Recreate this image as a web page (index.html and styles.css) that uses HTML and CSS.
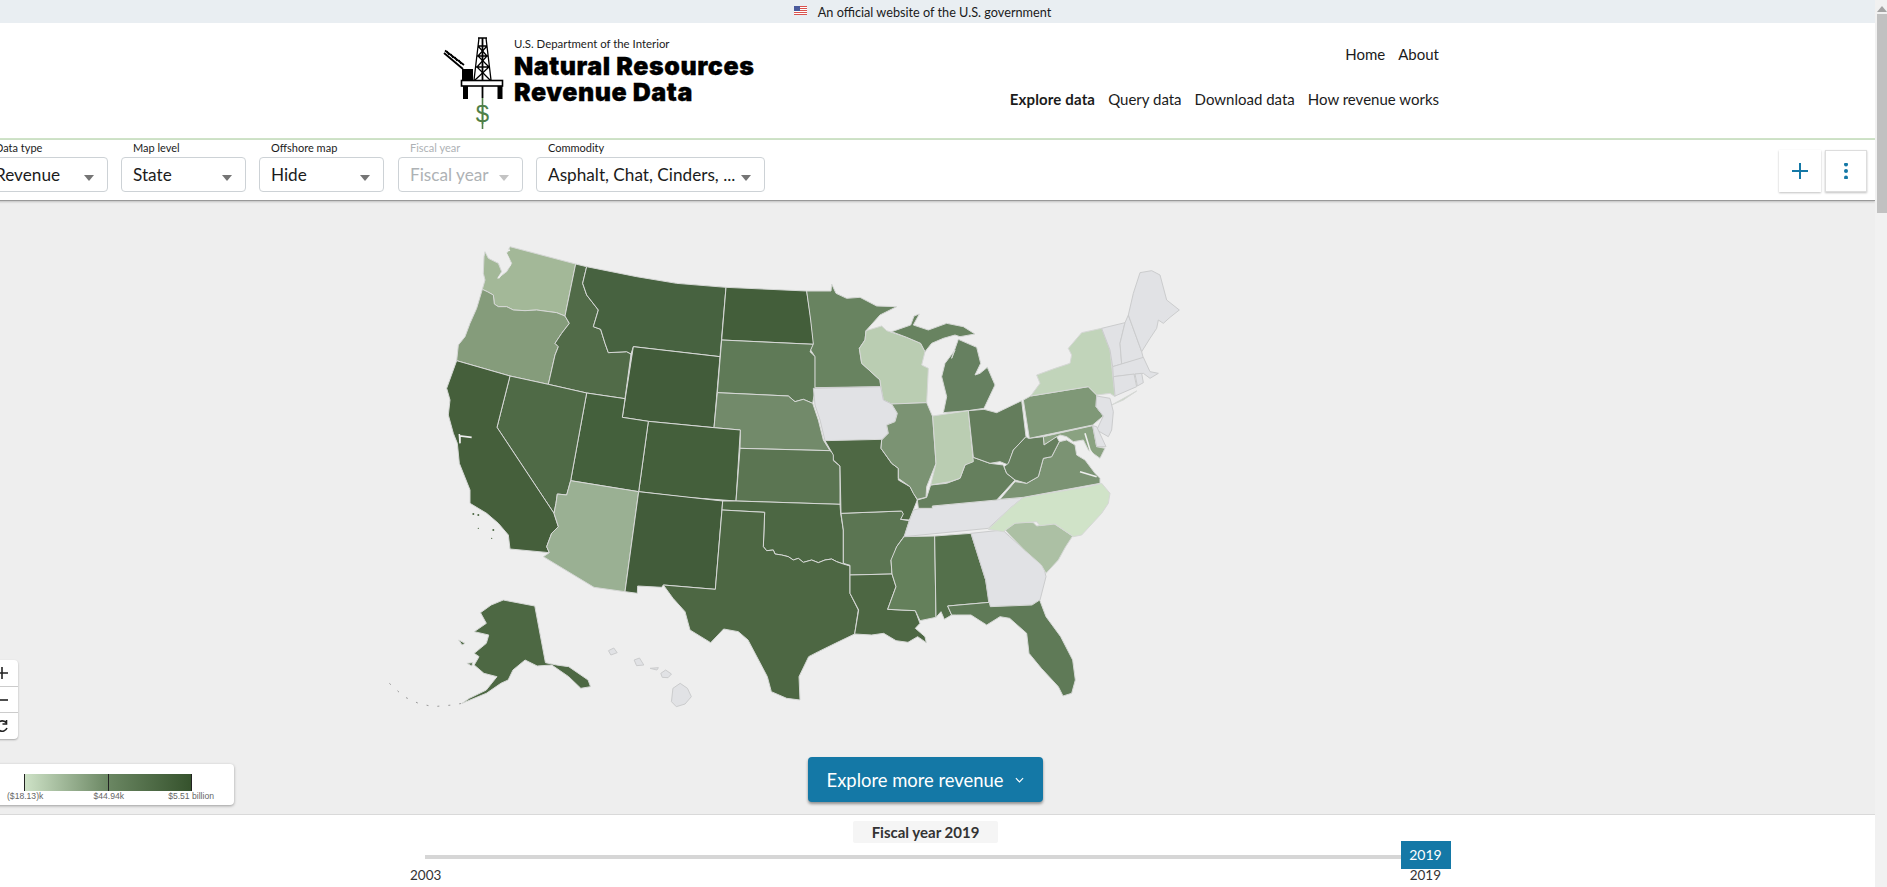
FILE: index.html
```html
<!DOCTYPE html>
<html lang="en">
<head>
<meta charset="utf-8">
<title>Natural Resources Revenue Data</title>
<link rel="stylesheet" href="styles.css">
</head>
<body>
<div class="page">
  <div class="banner">
    <svg class="flag" viewBox="0 0 13 9" aria-hidden="true">
      <rect width="13" height="9" fill="#fff"/>
      <path d="M0 .5h13M0 2.5h13M0 4.5h13M0 6.5h13M0 8.5h13" stroke="#d9534f" stroke-width="1"/>
      <rect width="6" height="5" fill="#4a5a9c"/>
    </svg>
    <span>An official website of the U.S. government</span>
  </div>
  <header class="site-header">
    <a class="logo">
      <svg class="logo-mark" viewBox="0 0 67 94" aria-hidden="true">
        <g fill="none" stroke="#000">
          <path d="M35 2h9M36 2 L31 44M43 2 L48 44M35 10h9M34 20h11M33 31h13M35 10 L44 20 L34 31 L47 44M44 10 L35 20 L46 31 L32 44" stroke-width="1.3"/>
          <path d="M39.5 2V62" stroke-width="1.8"/>
          <path d="M1 17 L20 33M2 14.5 L21 29" stroke-width="1.8"/>
          <path d="M4 15l2 4M8 18l2 4M12 21l2 4M16 24l2 4" stroke-width="1.3"/>
          <rect x="18.5" y="44.5" width="41" height="5.5" fill="#fff" stroke-width="1.6"/>
          <path d="M22.5 50v13M57 50v13" stroke-width="5"/>
        </g>
        <rect x="19" y="33" width="11" height="11.5"/>
        <path d="M39.5 62V93" stroke="#4f7f48" stroke-width="1.6"/>
        <text class="logo-dollar" x="39.5" y="86" text-anchor="middle">$</text>
      </svg>
      <span class="logo-text">
        <span class="logo-dept">U.S. Department of the Interior</span>
        <span class="logo-name">Natural Resources</span>
        <span class="logo-name">Revenue Data</span>
      </span>
    </a>
    <nav class="site-nav">
      <div class="nav-row nav-top"><a>Home</a><a>About</a></div>
      <div class="nav-row"><a class="active">Explore data</a><a>Query data</a><a>Download data</a><a>How revenue works</a></div>
    </nav>
  </header>
  <div class="filters">
    <div class="field"><label>Data type</label><div class="select"><span>Revenue</span><i class="caret"></i></div></div>
    <div class="field"><label>Map level</label><div class="select"><span>State</span><i class="caret"></i></div></div>
    <div class="field"><label>Offshore map</label><div class="select"><span>Hide</span><i class="caret"></i></div></div>
    <div class="field disabled"><label>Fiscal year</label><div class="select"><span>Fiscal year</span><i class="caret"></i></div></div>
    <div class="field wide"><label>Commodity</label><div class="select"><span>Asphalt, Chat, Cinders, ...</span><i class="caret"></i></div></div>
    <div class="tools">
      <button class="tool"><svg viewBox="0 0 16 16"><path d="M8 0v16M0 8h16" stroke="#1478a6" stroke-width="2"/></svg></button>
      <button class="tool outlined"><svg viewBox="0 0 16 16"><circle cx="8" cy="1.5" r="2"/><circle cx="8" cy="8" r="2"/><circle cx="8" cy="14.5" r="2"/></svg></button>
    </div>
  </div>
  <main class="map-area">
    <svg class="map" viewBox="0 0 2430 1500" aria-label="Map of revenue by state">
      <g>
        <polygon fill="#a3b898" points="420,50 617,102 585,258 560,248 500,240 465,242 430,240 410,230 385,230 373,222 370,195 352,185 337,178 345,150 340,130 342,80 345,65 355,85 385,100 395,125 383,145 410,125 425,100 410,70"/>
        <polygon fill="#859c7b" points="337,178 352,185 370,195 373,222 385,230 410,230 430,240 465,242 500,240 560,248 585,258 598,280 575,310 555,340 565,350 555,375 535,463 420,438 260,392 265,345 285,320 300,280 320,235"/>
        <polygon fill="#516b48" points="617,102 650,110 638,160 650,195 685,240 670,290 692,298 705,340 715,368 770,365 783,372 765,506 650,489 535,463 555,375 565,350 555,340 575,310 598,280 585,258"/>
        <polygon fill="#476240" points="650,110 800,140 920,160 1068,172 1050,380 790,350 783,372 770,365 715,368 705,340 692,298 670,290 685,240 650,195 638,160"/>
        <polygon fill="#425c3a" points="790,350 1050,380 1032,593 835,574 757,562"/>
        <polygon fill="#435e3a" points="1068,172 1310,183 1322,260 1332,343 1055,330"/>
        <polygon fill="#5f7a57" points="1055,330 1332,343 1320,365 1336,380 1336,475 1328,520 1300,508 1275,515 1255,498 1042,488"/>
        <polygon fill="#728a6a" points="1042,488 1255,498 1275,515 1300,508 1328,520 1345,570 1360,630 1380,662 1110,655 1111,600 1032,593"/>
        <polygon fill="#445f3b" points="835,574 1032,593 1111,600 1098,813 950,802 806,785"/>
        <polygon fill="#5b7552" points="1110,655 1380,662 1398,675 1390,692 1410,708 1410,823 1098,813"/>
        <polygon fill="#44603c" points="650,489 765,506 757,562 835,574 806,785 602,752"/>
        <polygon fill="#4f6a46" points="420,438 535,463 650,489 602,752 590,795 562,792 558,820 552,850 381,592"/>
        <polygon fill="#455f3b" points="260,392 420,438 381,592 552,850 565,890 545,910 530,950 538,968 420,957 415,915 385,880 350,850 300,820 300,780 268,700 262,640 250,610 235,555 240,510 230,475"/>
        <polygon fill="#9ab093" points="602,752 806,785 765,1085 672,1072 520,980 538,968 530,950 545,910 565,890 552,850 558,820 562,792 590,795"/>
        <polygon fill="#425c3a" points="806,785 1058,813 1036,1078 880,1065 875,1072 803,1068 802,1090 765,1085"/>
        <polygon fill="#4c6743" points="1058,813 1098,813 1410,823 1412,850 1420,900 1420,1002 1400,995 1385,987 1365,990 1345,998 1325,990 1300,997 1285,985 1270,990 1255,980 1235,975 1215,972 1210,960 1190,962 1180,950 1184,847 1056,840"/>
        <polygon fill="#4d6743" points="1056,840 1184,847 1180,950 1190,962 1210,960 1215,972 1235,975 1255,980 1270,990 1285,985 1300,997 1325,990 1345,998 1365,990 1385,987 1400,995 1420,1002 1440,1008 1440,1090 1465,1140 1454,1212 1396,1240 1345,1265 1316,1280 1287,1340 1290,1410 1250,1405 1204,1385 1192,1340 1134,1230 1105,1205 1061,1197 1022,1238 960,1200 945,1145 909,1105 880,1065 1036,1078"/>
        <polygon fill="#688360" points="1310,183 1383,183 1385,162 1398,190 1430,205 1470,202 1520,228 1580,230 1530,255 1488,302 1485,330 1468,355 1475,400 1530,450 1532,470 1335,473 1335,380 1322,360 1330,342 1322,270"/>
        <polygon fill="#5b7552" points="1413,850 1595,843 1605,852 1592,868 1618,872 1605,915 1580,950 1568,990 1563,990 1566,1032 1440,1035 1440,1006 1420,1000 1420,900"/>
        <polygon fill="#4d6743" points="1440,1035 1566,1032 1578,1070 1553,1138 1636,1142 1650,1180 1636,1195 1665,1220 1669,1238 1643,1220 1614,1237 1578,1232 1541,1210 1505,1215 1454,1212 1466,1140 1440,1090"/>
        <polygon fill="#64805b" points="1602,920 1694,918 1698,1162 1650,1172 1636,1142 1553,1138 1578,1070 1566,1032 1563,990 1580,950"/>
        <polygon fill="#54704b" points="1694,918 1803,910 1847,1050 1858,1117 1733,1128 1745,1155 1723,1168 1713,1145 1698,1162"/>
        <polygon class="none" points="1803,910 1898,900 1919,920 2021,1010 2028,1040 2010,1110 1985,1125 1858,1130 1847,1050"/>
        <polygon fill="#acc0a4" points="1897,890 1948,875 1990,878 2000,888 2050,880 2108,918 2087,950 2065,990 2028,1030 2014,1005 1963,960 1919,915"/>
        <polygon fill="#5f7a57" points="1733,1128 1858,1117 1861,1130 1986,1125 2009,1110 2028,1160 2072,1220 2108,1290 2116,1350 2105,1390 2079,1398 2065,1370 2014,1315 1977,1270 1970,1210 1919,1165 1890,1160 1850,1185 1803,1155 1760,1155 1745,1155"/>
        <polygon class="none" points="1630,840 1687,828 1960,802 1920,835 1855,895 1602,920 1618,872"/>
      </g>
      <g transform="translate(1230 90)">
        <polygon fill="#d0e3c8" points="730,712 925,680 965,670 990,700 985,730 965,760 905,825 880,830 825,792 780,797 770,785 705,790 670,815 625,808 690,745"/>
        <polygon fill="#bacdb2" points="258,212 305,198 320,212 380,232 422,250 435,275 425,315 445,325 440,428 335,432 310,420 302,375 300,360 245,310 238,265 255,240"/>
        <polygon fill="#688360" points="335,215 392,195 402,168 418,162 400,195 445,210 500,190 550,200 585,222 540,230 525,225 490,235 455,250 435,275 422,250 380,232"/>
        <polygon fill="#668060" points="535,238 590,262 602,310 585,345 600,340 622,322 645,375 612,445 565,452 490,458 500,410 485,350 495,310 525,270 515,295"/>
        <polygon class="none" points="100,385 302,380 310,420 335,432 352,460 345,485 320,495 325,520 305,540 135,542 120,480 105,435"/>
        <polygon fill="#4e6844" points="135,542 305,538 303,565 335,610 355,625 355,660 390,680 412,720 400,750 388,780 362,778 370,762 365,753 183,760 180,618 160,600 160,585"/>
        <polygon fill="#657f5d" points="415,745 412,720 440,712 452,675 500,670 540,655 555,615 580,592 630,610 670,615 680,640 705,660 650,720 457,738 457,745"/>
        <polygon fill="#7b9373" points="335,432 440,428 458,470 468,610 440,680 438,712 412,718 400,700 390,680 355,655 355,625 335,610 303,565 305,540 325,520 320,495 345,485 352,460"/>
        <polygon fill="#bacdb2" points="458,468 565,452 580,605 555,615 540,655 510,665 480,670 452,675 468,610"/>
        <polygon fill="#647d5c" points="565,452 612,448 650,458 725,422 738,530 700,570 685,615 660,605 630,610 580,592"/>
        <polygon fill="#7b9373" points="660,718 705,665 740,670 775,650 790,595 815,590 838,545 860,540 885,555 890,585 915,600 945,640 960,655 960,670 730,712"/>
        <polygon fill="#8aa281" points="790,530 938,497 950,560 975,565 960,595 925,570 910,540 880,545 860,530 840,525 792,555"/>
        <polygon fill="#667f5e" points="738,530 745,535 790,530 792,555 830,530 838,545 815,590 790,595 775,650 740,670 705,660 680,640 672,620 685,610 700,570"/>
        <polygon fill="#7f9877" points="730,420 752,408 925,380 950,405 948,440 970,468 938,495 748,535"/>
        <polygon fill="#c1d4ba" points="752,408 780,370 770,345 825,325 870,310 875,285 865,265 905,218 965,205 990,270 1005,410 990,400 950,405 925,380"/>
        <polygon fill="#c1d4ba" points="995,435 1070,393 1030,420"/>
        <polygon class="none" points="950,408 990,415 1000,455 995,510 985,530 950,510 970,468 948,440"/>
        <polygon class="none" points="938,497 950,500 978,560 950,560"/>
        <polygon class="none" points="965,205 1035,188 1020,250 1025,312 998,320 990,270"/>
        <polygon class="none" points="1035,188 1045,165 1085,275 1090,295 1025,312 1020,250"/>
        <polygon class="none" points="1045,165 1060,100 1080,38 1115,32 1140,45 1160,120 1198,150 1170,172 1150,190 1135,180 1130,205 1110,235 1085,275"/>
        <polygon class="none" points="998,320 1090,292 1110,335 1135,340 1110,355 1090,340 1000,350"/>
        <polygon class="none" points="1000,350 1062,342 1070,380 1005,408"/>
        <polygon class="none" points="1065,342 1085,340 1090,368 1072,378"/>
        <polyline class="water" points="915,520 930,570 955,610 955,640"/>
        <polyline class="water" points="900,635 950,650"/>
      </g>
      <polyline class="water" points="420,60 405,65 415,85 420,105 400,125 385,145"/>
      <polyline class="water" points="268,612 270,640 270,618 305,622"/>
      <g fill="#4d6843">
        <circle cx="310" cy="852" r="3"/><circle cx="325" cy="855" r="3"/><circle cx="370" cy="900" r="3"/><circle cx="325" cy="895" r="2"/><circle cx="365" cy="925" r="2"/>
      </g>
      <g transform="translate(0 750) scale(1.454 1)">
        <polygon fill="#4d6843" points="275,360 340,378 362,548 385,555 410,560 450,600 455,620 435,625 410,590 375,555 345,558 320,540 295,570 285,600 270,610 240,640 190,670 205,655 240,630 262,590 235,580 215,555 225,530 215,520 240,490 245,465 215,455 240,430 228,398 250,375"/>
        <polygon class="none" points="625,625 640,610 655,625 663,650 650,672 632,680 622,665"/>
        <polygon class="none" points="600,580 610,570 622,582 615,593 603,592"/>
        <polygon class="none" points="578,565 595,563 592,570"/>
        <polygon class="none" points="492,512 503,504 510,518 497,525"/>
        <polygon class="none" points="545,540 556,534 565,555 550,557"/>
        <polygon fill="#4d6843" points="183,480 196,490 190,495"/>
        <polygon fill="#4d6843" points="200,550 212,548 210,558"/>
        <polyline class="aleut" points="40,610 70,650 100,670 130,680 170,675 190,670"/>
      </g>
    </svg>
    <div class="zoom-controls">
      <button><svg viewBox="0 0 14 14"><path d="M7 1v12M1 7h12" stroke="#222" stroke-width="1.6"/></svg></button>
      <button><svg viewBox="0 0 14 14"><path d="M1 7h12" stroke="#222" stroke-width="1.6"/></svg></button>
      <button><svg viewBox="0 0 14 14"><path d="M11 3.5A5.2 5.2 0 1 0 12 9M11.5 1v4h-4" fill="none" stroke="#222" stroke-width="1.6"/></svg></button>
    </div>
    <div class="legend">
      <div class="legend-bar"><i></i><i></i><i></i></div>
      <div class="legend-labels"><span>($18.13)k</span><span>$44.94k</span><span>$5.51 billion</span></div>
    </div>
    <button class="explore">Explore more revenue<svg viewBox="0 0 10 6"><path d="M1 1l4 4 4-4" fill="none" stroke="#fff" stroke-width="1.3"/></svg></button>
  </main>
  <footer class="timeline">
    <div class="year-pill">Fiscal year 2019</div>
    <div class="slider">
      <div class="track"></div>
      <div class="thumb">2019</div>
    </div>
    <div class="ends"><span>2003</span><span>2019</span></div>
  </footer>
</div>
<aside class="scrollbar"><i class="arrow"></i><i class="scroll-thumb"></i></aside>
</body>
</html>
```
FILE: styles.css
```css
* { box-sizing: border-box; }
html, body { height: 100%; }
body {
  margin: 0;
  display: flex;
  height: 887px;
  overflow: hidden;
  font-family: Lato, "Noto Sans", sans-serif;
  color: #1b1b1b;
  background: #fff;
}
.page { width: 1875px; flex: none; height: 887px; overflow: hidden; display: flex; flex-direction: column; }

.banner {
  height: 23px;
  flex: none;
  background: #e9eef2;
  display: flex;
  align-items: center;
  justify-content: center;
  gap: 11px;
  font-size: 12.7px;
  padding-right: 30px;
}
.flag { width: 13px; height: 9px; margin-top: -3px; }

.site-header {
  height: 117px;
  flex: none;
  border-bottom: 2px solid #cfe3c8;
  padding: 13px 436px 0 443px;
  display: flex;
  justify-content: space-between;
}
.logo { display: flex; align-items: flex-start; gap: 4px; }
.logo-mark { width: 67px; height: 94px; }
.logo-dollar { font: 400 24px "Liberation Sans", sans-serif; fill: #4f7f48; }
.logo-text { display: flex; flex-direction: column; }
.logo-dept { font-size: 11.4px; line-height: 15px; margin-bottom: 2px; }
.logo-name { font: 900 25px/26px Inter, "Liberation Sans", sans-serif; color: #000; letter-spacing: .55px; -webkit-text-stroke: .3px #000; }
.site-nav { display: flex; flex-direction: column; align-items: flex-end; padding-top: 9px; gap: 26px; }
.nav-row { display: flex; gap: 13px; font-size: 15px; line-height: 19px; }
.active { font-weight: 700; letter-spacing: .15px; }

.filters {
  height: 61px;
  flex: none;
  background: #fff;
  display: flex;
  align-items: flex-start;
  gap: 13px;
  margin-left: -17px;
  padding: 0 8px 0 0;
  border-bottom: 1px solid #999;
  box-shadow: 0 1px 2px rgba(0,0,0,.2);
  position: relative;
  z-index: 2;
}
.field { width: 125px; }
.field.wide { width: 229px; }
.field.disabled { margin-left: 1px; }
.field label { display: block; font-size: 11px; line-height: 15px; margin-bottom: 2px; padding-left: 12px; }
.select {
  height: 35px;
  border: 1px solid #cdd2d6;
  border-radius: 4px;
  display: flex;
  align-items: center;
  justify-content: space-between;
  padding: 0 13px 1px 11px;
  font-size: 17.2px;
  white-space: nowrap;
}
.caret { width: 0; height: 0; border: 5px solid transparent; border-top: 6px solid #757575; border-bottom: 0; margin-top: 7px; }
.disabled { color: #aeb2b5; }
.disabled .caret { border-top-color: #c3c3c3; }
.tools { margin-left: auto; display: flex; gap: 4px; padding-top: 10px; }
.tool {
  width: 42px; height: 42px; padding: 0; background: #fff;
  border: 0; box-shadow: 0 1px 2px rgba(0,0,0,.25);
  display: flex; align-items: center; justify-content: center;
}
.tool svg { width: 16px; height: 16px; fill: #1478a6; }
.tool.outlined { border: 1px solid #ddd; }

.map-area {
  flex: 1;
  position: relative;
  background: #eee;
  padding: 29px 0 0 370px;
  border-bottom: 1px solid #d9d9d9;
}
.map { display: block; width: 810px; height: 500px; }
.map polygon { stroke: #d6d8d6; stroke-width: 1; vector-effect: non-scaling-stroke; stroke-linejoin: round; }
.map .none { fill: #e1e2e5; stroke: #cbcccd; }
.map .water { fill: none; stroke: #eee; stroke-width: 1.6; vector-effect: non-scaling-stroke; }
.map .aleut { fill: none; stroke: #999; stroke-width: 1; stroke-dasharray: 2 9; vector-effect: non-scaling-stroke; }

.zoom-controls {
  position: absolute; left: -14px; top: 459px; width: 32px; height: 79px;
  background: #fff; border-radius: 4px;
  box-shadow: 0 1px 2px rgba(0,0,0,.3);
  display: flex; flex-direction: column;
}
.zoom-controls button {
  flex: 1; padding: 0; background: none; border: 0; border-bottom: 1px solid #ccc;
  display: flex; align-items: center; justify-content: center;
}
.zoom-controls button:last-child { border-bottom: 0; }
.zoom-controls svg { width: 14px; height: 14px; }

.legend {
  position: absolute; left: -10px; top: 563px; width: 244px; height: 41px;
  background: #fff; border-radius: 4px;
  box-shadow: 0 1px 3px rgba(0,0,0,.35);
  padding: 10px 0 0 34px;
}
.legend-bar {
  width: 168px; height: 17px;
  background: linear-gradient(90deg, #cfe3c8, #6b8763 50%, #35522c);
  display: flex; justify-content: space-between;
}
.legend-bar i { width: 1px; background: #222; }
.legend-labels {
  display: flex; justify-content: space-between;
  margin: 0 20px 0 -17px;
  font: 8.6px/11px "Liberation Sans", sans-serif;
  color: #666;
}
.legend-labels span:nth-child(2) { margin-left: 6px; }

.explore {
  position: absolute; left: 808px; top: 556px; width: 235px; height: 45px;
  background: #1478a6; color: #fff; border: 0; border-radius: 4px;
  box-shadow: 0 2px 3px rgba(0,0,0,.4);
  font: 18.4px Lato, sans-serif;
  display: flex; align-items: center; justify-content: center; gap: 12px;
}
.explore svg { width: 9px; height: 6px; }

.timeline { height: 72px; flex: none; background: #fff; display: flex; flex-direction: column; align-items: center; padding-top: 6px; }
.year-pill {
  width: 145px; height: 22px; background: #f5f5f5; border-radius: 2px;
  font-size: 15px; font-weight: 700; line-height: 22px; text-align: center;
  margin-left: -24px; color: #333;
}
.slider { position: relative; width: 1025px; height: 28px; margin: -2px 0 0 -1px; display: flex; align-items: center; }
.track { width: 100%; height: 4px; background: #d6d6d6; margin-top: 4px; }
.thumb {
  position: absolute; right: -1px; top: 0; width: 50px; height: 28px;
  background: #1478a6; color: #fff; font-size: 14px; line-height: 28px; text-align: center;
}
.ends { width: 1031px; display: flex; justify-content: space-between; font-size: 13.5px; line-height: 17px; margin: -2px 0 0 -24px; color: #333; }

.scrollbar { width: 12px; flex: none; background: #f1f1f1; height: 887px; display: flex; flex-direction: column; align-items: flex-end; }
.arrow { width: 0; height: 0; margin: 6px 0 0; border: 5px solid transparent; border-bottom: 6px solid #a3a3a3; border-top: 0; }
.scroll-thumb { width: 10px; height: 199px; margin-top: 2px; background: #c1c1c1; }
```
